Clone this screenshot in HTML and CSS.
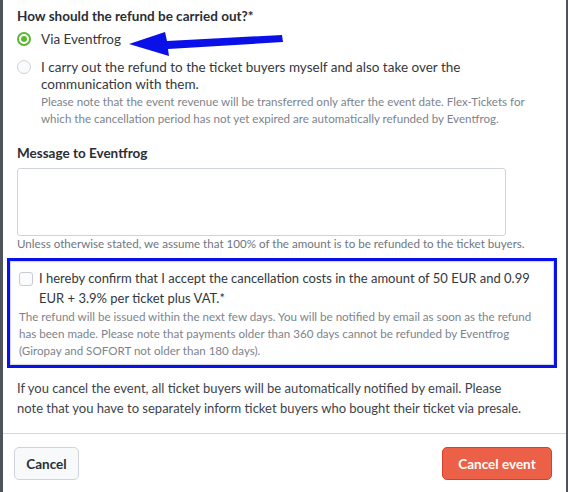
FILE: index.html
```html
<!DOCTYPE html>
<html>
<head>
<meta charset="utf-8">
<link rel="stylesheet" href="styles.css">
</head>
<body>
<div class="modal">
  <div class="content">
    <div class="heading">How should the refund be carried out?*</div>
    <div class="radio-row first">
      <span class="radio checked"><span class="dot"></span></span>
      <span class="radio-label">Via Eventfrog</span>
    </div>
    <div class="radio-row second">
      <span class="radio"></span>
      <div class="radio-text">
        <div class="radio-label multi">I carry out the refund to the ticket buyers myself and also take over the communication with them.</div>
        <div class="hint">Please note that the event revenue will be transferred only after the event date. Flex-Tickets for which the cancellation period has not yet expired are automatically refunded by Eventfrog.</div>
      </div>
    </div>
    <div class="heading msg">Message to Eventfrog</div>
    <div class="textarea"></div>
    <div class="note">Unless otherwise stated, we assume that 100% of the amount is to be refunded to the ticket buyers.</div>
    <div class="highlight">
      <div class="inner">
        <div class="check-row">
          <span class="checkbox"></span>
          <div class="check-label">I hereby confirm that I accept the cancellation costs in the amount of 50 EUR and 0.99 EUR + 3.9% per ticket plus VAT.*</div>
        </div>
        <div class="hint box-hint">The refund will be issued within the next few days. You will be notified by email as soon as the refund has been made. Please note that payments older than 360 days cannot be refunded by Eventfrog (Giropay and SOFORT not older than 180 days).</div>
      </div>
    </div>
    <p class="info">If you cancel the event, all ticket buyers will be automatically notified by email. Please<br>note that you have to separately inform ticket buyers who bought their ticket via presale.</p>
  </div>
  <div class="footer">
    <button class="btn btn-cancel">Cancel</button>
    <button class="btn btn-danger">Cancel event</button>
  </div>
  <svg class="arrow" width="170" height="40" viewBox="0 0 170 40">
    <polygon points="1,15 37,3 39,12 154,6 155,13 40,20 41,27" fill="#0a10e8"/>
  </svg>
</div>
</body>
</html>
```

FILE: styles.css
```css
* { box-sizing: border-box; }
html, body { margin: 0; padding: 0; background: #fff; }
body {
  font-family: Lato, "Open Sans", sans-serif;
  color: #333840;
  width: 568px;
  height: 492px;
  overflow: hidden;
}
.modal {
  position: relative;
  width: 568px;
  height: 492px;
  border-left: 3px solid #4d525b;
  border-right: 2px solid #4d525b;
  background: #fff;
  display: flex;
  flex-direction: column;
}
.content {
  padding: 7px 14px 0 14px;
}
.heading {
  font-weight: 700;
  font-size: 13.5px;
  line-height: 18px;
  color: #2a2e35;
}
.radio-row {
  display: flex;
  align-items: flex-start;
  gap: 10px;
}
.radio-row.first { margin-top: 6px; }
.radio-row.second { margin-top: 11px; }
.radio {
  flex: none;
  width: 14px;
  height: 14px;
  border-radius: 50%;
  border: 1px solid #cdd2d9;
  background: #fafbfc;
  display: flex;
  align-items: center;
  justify-content: center;
  margin-top: 1px;
}
.radio.checked {
  border: 2px solid #5cb82f;
  background: #fff;
}
.radio .dot {
  width: 6px;
  height: 6px;
  border-radius: 50%;
  background: #5cb82f;
}
.radio-label {
  font-size: 13.5px;
  line-height: 17px;
  color: #333840;
}
.hint {
  font-size: 11.6px;
  line-height: 17px;
  color: #7d838d;
}
.radio-text .hint { margin-top: 0; }
.heading.msg { margin-top: 17px; }
.textarea {
  margin-top: 6px;
  width: 489px;
  height: 68px;
  border: 1px solid #cfd4da;
  border-radius: 3px;
  background: #fff;
}
.note {
  font-size: 11.6px;
  line-height: 16px;
  color: #6f757f;
  margin-top: 0;
}
.highlight {
  margin: 6px -5px 0 -10px;
  border: 3px solid #0a10e8;
  padding: 0;
}
.inner {
  border: 1px solid #d5d9df;
  box-shadow: inset 0 0 2px rgba(0,0,0,0.08);
  padding: 6px 8px 5px 8px;
}
.check-row {
  display: flex;
  align-items: flex-start;
  gap: 6px;
}
.checkbox {
  flex: none;
  width: 14px;
  height: 14px;
  border: 1px solid #c7ccd4;
  border-radius: 3px;
  background: #fafbfc;
  margin-top: 4px;
}
.check-label {
  font-size: 13px;
  line-height: 20px;
  color: #333840;
}
.box-hint { margin-top: 0; }
.info {
  margin: 10px 0 0 0;
  max-width: 530px;
  font-size: 13px;
  line-height: 20px;
  color: #3e434b;
}
.footer {
  margin-top: 15px;
  border-top: 1px solid #d3d7dd;
  padding: 13px 14px 0 11px;
  display: flex;
  justify-content: space-between;
  align-items: flex-start;
}
.btn {
  font-family: Lato, "Open Sans", sans-serif;
  font-weight: 700;
  font-size: 13.5px;
  height: 33px;
  border-radius: 5px;
  cursor: pointer;
}
.btn-cancel {
  width: 65px;
  background: #f8f9fb;
  border: 1px solid #cfd4da;
  color: #2a2e35;
}
.btn-danger {
  width: 110px;
  background: #ec6048;
  border: 1px solid #d4402a;
  color: #fff;
}
.arrow {
  position: absolute;
  left: 125px;
  top: 29px;
}
```
